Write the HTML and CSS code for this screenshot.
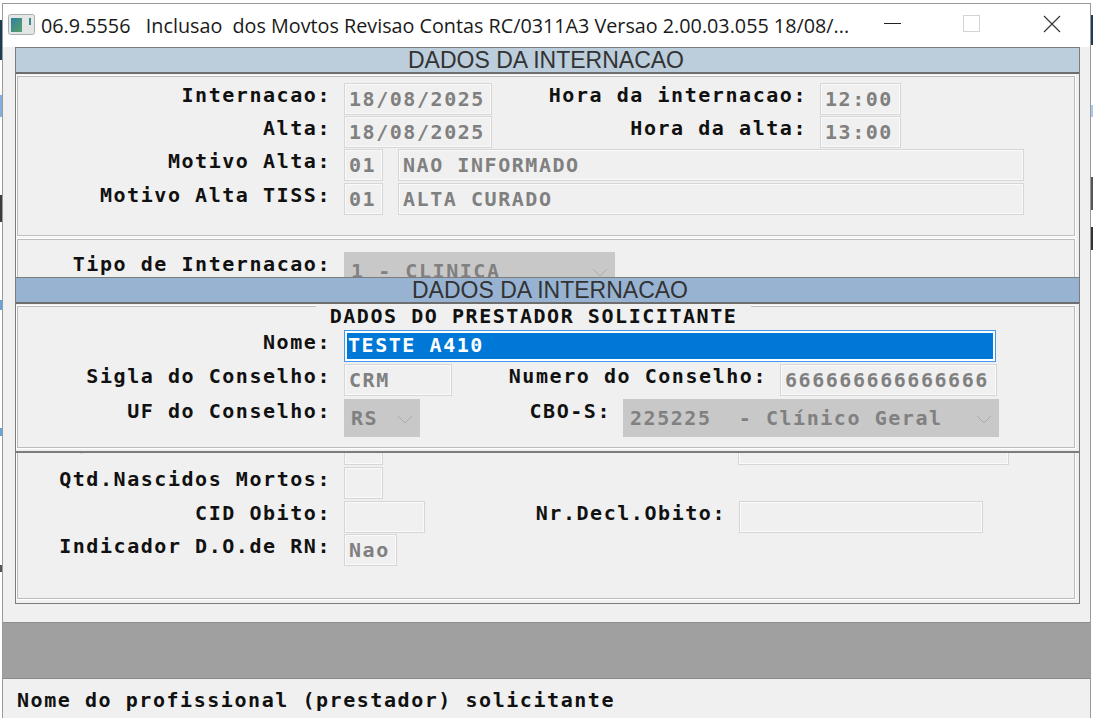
FILE: index.html
```html
<!DOCTYPE html>
<html lang="pt">
<head>
<meta charset="utf-8">
<title>Dados da Internacao</title>
<link rel="stylesheet" href="styles.css">
</head>
<body>
<div class="window">
  <header class="titlebar">
    <svg class="app-icon" width="27" height="21" viewBox="0 0 27 21">
      <defs><linearGradient id="g" x1="0" y1="0" x2="1" y2="1"><stop offset="0" stop-color="#2f7fa0"/><stop offset="1" stop-color="#5aa06a"/></linearGradient></defs>
      <rect x="0.5" y="0.5" width="26" height="20" rx="2" fill="#e4e6e6" stroke="#a8b0b0"/>
      <rect x="3" y="4" width="11" height="14" fill="url(#g)"/>
      <rect x="21" y="4" width="2" height="7" fill="#3d8a8a"/>
    </svg>
    <span class="title">06.9.5556   Inclusao  dos Movtos Revisao Contas RC/0311A3 Versao 2.00.03.055 18/08/...</span>
    <div class="controls">
      <svg width="18" height="18" viewBox="0 0 18 18"><path d="M0 8.5H17" stroke="#222" fill="none"/></svg>
      <svg class="ctl-max" width="18" height="18" viewBox="0 0 18 18"><rect x="0.5" y="0.5" width="16" height="16" fill="none" stroke="#d4d4d4"/></svg>
      <svg width="18" height="18" viewBox="0 0 18 18"><path d="M1 1L17 17M17 1L1 17" stroke="#333" fill="none" stroke-width="1.1"/></svg>
    </div>
  </header>

  <main class="frame">
    <div class="band band-pale">DADOS DA INTERNACAO</div>
    <section class="panel panel-top">
      <div class="row r33">
        <span class="lbl lbl-main">Internacao:</span><span class="fld w148">18/08/2025</span>
        <span class="lbl lbl-hora">Hora da internacao:</span><span class="fld w81">12:00</span>
      </div>
      <div class="row r33">
        <span class="lbl lbl-main">Alta:</span><span class="fld w148">18/08/2025</span>
        <span class="lbl lbl-hora">Hora da alta:</span><span class="fld w81">13:00</span>
      </div>
      <div class="row r34">
        <span class="lbl lbl-main">Motivo Alta:</span><span class="fld w39">01</span><span class="fld w626">NAO INFORMADO</span>
      </div>
      <div class="row r34">
        <span class="lbl lbl-main">Motivo Alta TISS:</span><span class="fld w39">01</span><span class="fld w626">ALTA CURADO</span>
      </div>
    </section>

    <section class="panel panel-bottom">
      <div class="row r-tipo">
        <span class="lbl lbl-main">Tipo de Internacao:</span>
        <span class="sel w272">1 - CLINICA<svg class="chev" width="16" height="9" viewBox="0 0 16 9"><path d="M1 1L8 8L15 1" fill="none" stroke="#aaa"/></svg></span>
      </div>
      <div class="row r34">
        <span class="lbl lbl-main lbl-hidden">Qtd.Nascidos Vivos:</span><span class="fld w39"></span>
        <span class="lbl lbl-qvivos"></span><span class="fld w271"></span>
      </div>
      <div class="row r34">
        <span class="lbl lbl-main">Qtd.Nascidos Mortos:</span><span class="fld w39"></span>
      </div>
      <div class="row r33">
        <span class="lbl lbl-main">CID Obito:</span><span class="fld w80"></span>
        <span class="lbl lbl-decl">Nr.Decl.Obito:</span><span class="fld w244"></span>
      </div>
      <div class="row r33">
        <span class="lbl lbl-main">Indicador D.O.de RN:</span><span class="fld w52">Nao</span>
      </div>
    </section>

    <div class="overlay">
      <div class="band band-strong">DADOS DA INTERNACAO</div>
      <section class="panel panel-over">
        <div class="legend">DADOS DO PRESTADOR SOLICITANTE</div>
        <div class="row r34">
          <span class="lbl lbl-main">Nome:</span><span class="fld-active"><span class="selected">TESTE A410</span></span>
        </div>
        <div class="row r35">
          <span class="lbl lbl-main">Sigla do Conselho:</span><span class="fld w108">CRM</span>
          <span class="lbl lbl-num">Numero do Conselho:</span><span class="fld w217">666666666666666</span>
        </div>
        <div class="row r38">
          <span class="lbl lbl-main">UF do Conselho:</span>
          <span class="sel w76">RS<svg class="chev" width="16" height="9" viewBox="0 0 16 9"><path d="M1 1L8 8L15 1" fill="none" stroke="#aaa"/></svg></span>
          <span class="lbl lbl-cbo">CBO-S:</span>
          <span class="sel w376">225225  - Clínico Geral<svg class="chev" width="16" height="9" viewBox="0 0 16 9"><path d="M1 1L8 8L15 1" fill="none" stroke="#aaa"/></svg></span>
        </div>
      </section>
    </div>
  </main>

  <div class="graybar"></div>
  <footer class="status">Nome do profissional (prestador) solicitante</footer>
</div>
</body>
</html>
```
FILE: styles.css
```css
* { box-sizing: border-box; }
html, body { margin: 0; height: 718px; overflow: hidden; }
body {
  padding: 3px 2px 0;
  font-family: "DejaVu Sans Mono", "Liberation Mono", monospace;
  font-weight: 700;
  font-size: 20px;
  letter-spacing: 1.55px;
  background-color: #fff;
  background-repeat: no-repeat;
  background-size: 2px 100%, 2px 100%;
  background-position: left top, right top;
  background-image:
    linear-gradient(#fff 20px, #1c3c50 20px, #1c3c50 60px, #fff 60px, #fff 95px, #7fb0e0 95px, #7fb0e0 117px, #fff 117px, #fff 195px, #3c3c3c 195px, #3c3c3c 222px, #fff 222px, #fff 300px, #6aa2e0 300px, #6aa2e0 310px, #fff 310px, #fff 428px, #6aa2e0 428px, #6aa2e0 436px, #fff 436px, #fff 565px, #555 565px, #555 572px, #fff 572px),
    linear-gradient(#fff 15px, #1c3c50 15px, #1c3c50 45px, #fff 45px, #fff 105px, #a8c8ee 105px, #a8c8ee 117px, #fff 117px, #fff 177px, #555 177px, #555 210px, #fff 210px, #fff 227px, #333 227px, #333 250px, #fff 250px);
}
.window {
  height: 715px;
  background: #f0f0f0;
  border: 1px solid #9a9a9a;
  border-bottom: 0;
}
.titlebar {
  height: 43px;
  background: #fff;
  display: flex;
  align-items: center;
  padding-left: 5px;
}
.app-icon { margin-top: -2px; flex: none; }
.title {
  margin-left: 6px;
  font: 400 19.75px/1 "Open Sans", "Noto Sans", sans-serif;
  letter-spacing: 0;
  color: #1a1a1a;
  white-space: pre;
}
.controls {
  margin-left: auto;
  display: flex;
  gap: 61px;
  padding-right: 29px;
  margin-top: -3px;
}
.ctl-max { margin-right: 1px; }
.frame {
  position: relative;
  margin-left: 12px;
  width: 1065px;
  border: 1px solid #7c7c7c;
}
.band {
  height: 26px;
  border-bottom: 2px solid #6e6e6e;
  text-align: center;
  font: 400 23px/25px "Liberation Sans", Arial, sans-serif;
  letter-spacing: 0;
  color: #333;
}
.band-pale { background: #bccddc; padding-right: 3px; }
.band-strong { background: #98b3d2; padding-left: 5px; }
.panel {
  margin: 2px 4px 0 1px;
  border: 1px solid #bcbcbc;
  box-shadow: 0 0 0 1px #fff;
  background: #f0f0f0;
}
.panel-top { padding: 6px 0 18px; }
.panel-bottom { margin-top: 3px; padding: 12px 0 31px; margin-bottom: 4px; }
.panel-over { padding-bottom: 10px; margin-bottom: 3px; }
.overlay {
  position: absolute;
  top: 229px;
  left: -1px;
  width: 1065px;
  background: #f0f0f0;
  border: 1px solid #7c7c7c;
  border-bottom-width: 2px;
}
.legend {
  width: 435px;
  height: 25px;
  margin: -2px 0 0 298px;
  background: #f0f0f0;
  text-align: center;
  line-height: 23px;
  color: #111;
  white-space: nowrap;
}
.row { display: flex; align-items: flex-start; }
.r-tipo { height: 181px; }
.r33 { height: 33px; }
.r34 { height: 34px; }
.r35 { height: 35px; }
.r38 { height: 38px; }
.lbl {
  flex: none;
  text-align: right;
  line-height: 25px;
  color: #111;
  white-space: nowrap;
}
.lbl-main { width: 313px; margin-right: 13px; }
.lbl-hidden { line-height: 22px; }
.lbl-hora { width: 315px; margin-right: 13px; }
.lbl-qvivos { width: 342px; margin-right: 13px; }
.lbl-decl { width: 301px; margin-right: 13px; }
.lbl-num { width: 315px; margin-right: 13px; }
.lbl-cbo { width: 191px; margin-right: 12px; }
.fld {
  flex: none;
  height: 32px;
  padding-left: 4px;
  border: 1px solid #d6d6d6;
  box-shadow: inset 0 0 0 1px #fafafa;
  line-height: 31px;
  color: #808080;
  white-space: pre;
}
.w39 { width: 39px; }
.w52 { width: 53px; }
.w80 { width: 81px; }
.w81 { width: 81px; }
.w108 { width: 108px; }
.w148 { width: 148px; }
.w217 { width: 217px; }
.w244 { width: 244px; }
.w271 { width: 271px; }
.w626 { width: 626px; margin-left: 15px; }
.sel {
  flex: none;
  position: relative;
  height: 38px;
  padding-left: 7px;
  background: #c8c8c8;
  line-height: 39px;
  color: #808080;
  white-space: pre;
}
.w76 { width: 76px; }
.w272 { width: 271px; }
.w376 { width: 376px; }
.chev { position: absolute; right: 7px; top: 16px; }
.fld-active {
  flex: none;
  width: 652px;
  height: 32px;
  border: 1px solid #3b99ef;
  background: #0078d7;
  box-shadow: inset 0 0 0 2px #fff;
  padding: 2px 4px 2px 2px;
}
.selected {
  display: block;
  height: 26px;
  padding-left: 1px;
  color: #fff;
  line-height: 24px;
}
.graybar {
  height: 57px;
  margin-top: 18px;
  background: #a0a0a0;
  border-top: 1px solid #8e8e8e;
  border-bottom: 1px solid #8a8a8a;
}
.status {
  padding: 7px 0 0 14px;
  line-height: 28px;
  color: #111;
  white-space: pre;
}
```
